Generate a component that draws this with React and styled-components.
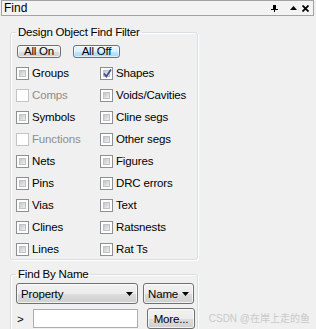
import React from "react";
import styled, { createGlobalStyle } from "styled-components";

const Global = createGlobalStyle`
  html, body { margin: 0; padding: 0; }
  body {
    background: #f0f0f0;
    width: 316px;
    height: 329px;
    overflow: hidden;
    font-family: "Liberation Sans", Arial, sans-serif;
    font-size: 11px;
    color: #000;
  }
`;

const Panel = styled.div`
  position: relative;
  width: 316px;
  height: 329px;
  display: flex;
  flex-direction: column;
  overflow: hidden;
`;

const TitleBar = styled.div`
  height: 14px;
  margin: 0 2px 0 1px;
  border: 1px solid #a3a3a3;
  background: #f3f3f3;
  display: flex;
  align-items: center;
  padding-left: 2px;
  font-size: 12px;
  line-height: 14px;
`;

const TitleText = styled.span`
  flex: 1;
`;

const TitleIcons = styled.div`
  display: flex;
  align-items: center;
  gap: 5px;
  padding-right: 4px;
  height: 14px;
`;

const Group = styled.fieldset`
  box-sizing: border-box;
  width: 188px;
  margin: ${(p) => p.$top}px 0 0 10px;
  padding: ${(p) => p.$pt}px 0 ${(p) => p.$pb}px 5px;
  border: 1px solid #d5dfe5;
  border-radius: 3px;
  box-shadow: inset 1px 1px 0 #fff, 1px 1px 0 #fff;
  min-width: 0;
`;

const Legend = styled.legend`
  padding: 0 2px;
  margin: 0;
  font-size: 11.5px;
  line-height: 14px;
  letter-spacing: -0.2px;
`;

const ButtonRow = styled.div`
  display: flex;
  gap: 12px;
  padding-left: 1px;
`;

const SmallButton = styled.button`
  box-sizing: border-box;
  width: ${(p) => p.$w}px;
  height: 13px;
  padding: 0;
  margin: 0;
  font: inherit;
  font-size: 11.5px;
  line-height: 11px;
  letter-spacing: -0.2px;
  color: #000;
  border-radius: 3px;
  border: 1px solid ${(p) => (p.$active ? "#3c7fb1" : "#707070")};
  background: ${(p) =>
    p.$active
      ? "linear-gradient(#eaf6fd 0%, #d9f0fc 50%, #bee6fd 50%, #a7d9f5 100%)"
      : "linear-gradient(#f2f2f2 0%, #ebebeb 50%, #dddddd 50%, #cfcfcf 100%)"};
  box-shadow: inset 0 0 0 1px rgba(255,255,255,0.6);
  overflow: hidden;
`;

const Grid = styled.div`
  display: grid;
  grid-template-columns: 84px 1fr;
  grid-auto-rows: 13px;
  row-gap: 9px;
  margin-top: 9px;
`;

const Item = styled.label`
  display: flex;
  align-items: center;
  gap: 3px;
  height: 13px;
  font-size: 11.5px;
  line-height: 13px;
  letter-spacing: -0.15px;
  color: ${(p) => (p.$disabled ? "#8d8d8d" : "#000")};
  white-space: nowrap;
`;

const Box = styled.span`
  position: relative;
  box-sizing: border-box;
  width: 13px;
  height: 13px;
  flex: none;
  border: 1px solid ${(p) => (p.$disabled ? "#c4c4c4" : "#8e8f8f")};
  background: #fff;
  padding: 2px;
  display: flex;
`;

const BoxInner = styled.span`
  flex: 1;
  background: ${(p) =>
    p.$disabled ? "#fff" : "linear-gradient(135deg, #b9bec5 0%, #dcdee1 55%, #f4f4f4 100%)"};
  box-shadow: ${(p) => (p.$disabled ? "none" : "inset 0 0 0 1px #bfc2c6")};
`;

const Check = styled.svg`
  position: absolute;
  left: 1px;
  top: 0px;
`;

const Row = styled.div`
  display: flex;
  align-items: center;
  gap: ${(p) => p.$gap}px;
  margin-top: ${(p) => p.$mt || 0}px;
`;

const Select = styled.div`
  box-sizing: border-box;
  width: ${(p) => p.$w}px;
  height: 21px;
  border: 1px solid #707070;
  border-radius: 3px;
  background: linear-gradient(#f2f2f2 0%, #ebebeb 50%, #dddddd 50%, #cfcfcf 100%);
  box-shadow: inset 0 0 0 1px rgba(255,255,255,0.7);
  display: flex;
  align-items: center;
  padding: 0 4px 0 4px;
  font-size: 11.5px;
  letter-spacing: -0.15px;
`;

const SelectText = styled.span`
  flex: 1;
`;

const Prompt = styled.span`
  width: 13px;
  padding-left: 1px;
  font-size: 11.5px;
`;

const TextInput = styled.input`
  box-sizing: border-box;
  width: 105px;
  height: 19px;
  margin: 0;
  padding: 0 2px;
  border: 1px solid #abadb3;
  background: #fff;
  font: inherit;
  outline: none;
`;

const MoreButton = styled.button`
  box-sizing: border-box;
  width: 48px;
  height: 21px;
  margin: 0 0 0 6px;
  padding: 0;
  font: inherit;
  font-size: 11.5px;
  letter-spacing: -0.15px;
  color: #000;
  border: 1px solid #707070;
  border-radius: 3px;
  background: linear-gradient(#f2f2f2 0%, #ebebeb 50%, #dddddd 50%, #cfcfcf 100%);
  box-shadow: inset 0 0 0 1px rgba(255,255,255,0.7);
`;

const Watermark = styled.div`
  position: absolute;
  right: 6px;
  top: 313px;
  font-family: "Liberation Sans", "Noto Sans CJK SC", sans-serif;
  font-size: 10px;
  line-height: 12px;
  color: #c9c9c9;
  white-space: nowrap;
`;

const Arrow = () => (
  <svg width="7" height="4" viewBox="0 0 7 4">
    <path d="M0 0H7L3.5 4Z" fill="#000" />
  </svg>
);

function CheckBox({ label, checked, disabled }) {
  return (
    <Item $disabled={disabled}>
      <Box $disabled={disabled}>
        <BoxInner $disabled={disabled} />
        {checked && (
          <Check width="11" height="11" viewBox="0 0 11 11">
            <path d="M2 5.5L4.3 8.5L9 1.5" fill="none" stroke="#3d4f93" strokeWidth="1.8" />
          </Check>
        )}
      </Box>
      {label}
    </Item>
  );
}

const left = [
  ["Groups"],
  ["Comps", false, true],
  ["Symbols"],
  ["Functions", false, true],
  ["Nets"],
  ["Pins"],
  ["Vias"],
  ["Clines"],
  ["Lines"],
];
const right = [
  ["Shapes", true],
  ["Voids/Cavities"],
  ["Cline segs"],
  ["Other segs"],
  ["Figures"],
  ["DRC errors"],
  ["Text"],
  ["Ratsnests"],
  ["Rat Ts"],
];

export default function App() {
  const cells = [];
  left.forEach((l, i) => {
    cells.push(<CheckBox key={"l" + i} label={l[0]} checked={l[1]} disabled={l[2]} />);
    const r = right[i];
    cells.push(<CheckBox key={"r" + i} label={r[0]} checked={r[1]} disabled={r[2]} />);
  });
  return (
    <Panel>
      <Global />
      <TitleBar>
        <TitleText>Find</TitleText>
        <TitleIcons>
          <svg width="7" height="7" viewBox="0 0 7 7">
            <path d="M2 0H5V4H2Z M0 4H7V5H0Z M3 5H4V7H3Z" fill="#000" />
          </svg>
          <svg width="7" height="4" viewBox="0 0 7 4" style={{ marginLeft: 7 }}>
            <path d="M3.5 0L7 4H0Z" fill="#000" />
          </svg>
          <svg width="7" height="7" viewBox="0 0 7 7">
            <path d="M0.5 0.5L6.5 6.5M6.5 0.5L0.5 6.5" stroke="#000" strokeWidth="1.8" />
          </svg>
        </TitleIcons>
      </TitleBar>

      <Group $top={9} $pt={6} $pb={3}>
        <Legend>Design Object Find Filter</Legend>
        <ButtonRow>
          <SmallButton $w={44}>All On</SmallButton>
          <SmallButton $w={47} $active>All Off</SmallButton>
        </ButtonRow>
        <Grid>{cells}</Grid>
      </Group>

      <Group $top={7} $pt={2} $pb={8}>
        <Legend>Find By Name</Legend>
        <Row $gap={5}>
          <Select $w={122}>
            <SelectText>Property</SelectText>
            <Arrow />
          </Select>
          <Select $w={51}>
            <SelectText>Name</SelectText>
            <Arrow />
          </Select>
        </Row>
        <Row $gap={3} $mt={4}>
          <Prompt>&gt;</Prompt>
          <TextInput defaultValue="" />
          <MoreButton>More...</MoreButton>
        </Row>
      </Group>

      <Watermark>CSDN @在岸上走的鱼</Watermark>
    </Panel>
  );
}
